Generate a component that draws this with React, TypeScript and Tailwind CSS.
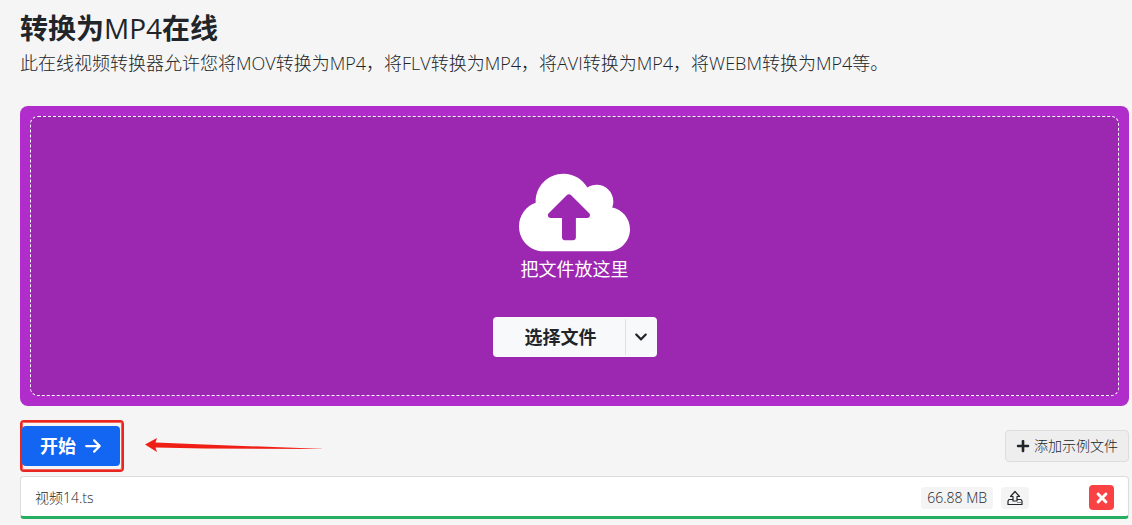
import { FunctionComponent, ReactNode } from 'react';
import { FaChevronDown, FaCloudUploadAlt, FaPlus, FaTimes } from 'react-icons/fa';
import { FaArrowRight } from 'react-icons/fa6';

interface ConvertFile {
  name: string;
  size: string;
}

const files: ConvertFile[] = [{ name: '视频14.ts', size: '66.88 MB' }];

const UploadIcon: FunctionComponent = () => (
  <svg
    className="h-4 w-4"
    viewBox="0 0 16 16"
    fill="none"
    stroke="currentColor"
    strokeWidth="1.2"
    strokeLinejoin="round"
    aria-hidden="true"
  >
    <path d="M8 1.5 12.5 6.5H10V11H6V6.500H3.500Z" />
    <path d="M6 9.500H2L1 11V14.500H15V11L14 9.500H10" />
    <path d="M10.500 12.500H11.500M12.500 12.500H13.500" />
  </svg>
);

const Arrow: FunctionComponent = () => (
  <svg className="ml-5 h-4 w-[182px]" viewBox="0 0 182 16" aria-hidden="true">
    <path d="M1 6.500 13 0 11.500 4.500 60 6.500 182 11 60 10.500 11.500 9.500 13 14Z" fill="#f01f16" />
  </svg>
);

const Dropzone: FunctionComponent = () => (
  <section className="mt-7 rounded-lg bg-[#b02dcb] p-2.5">
    <div className="flex h-[280px] flex-col items-center rounded-lg border border-dashed border-white bg-[#9c27b0] pt-[51px] text-white">
      <FaCloudUploadAlt className="h-[89px] w-[111px]" />
      <p className="text-lg leading-6">把文件放这里</p>
      <div className="mt-9 flex h-10 overflow-hidden rounded bg-[#f8f9fa] text-[#212529]">
        <button type="button" className="pr-7 pl-8 text-lg font-bold">
          选择文件
        </button>
        <button
          type="button"
          aria-label="更多来源"
          className="my-0.5 flex w-8 items-center border-l border-[#dee2e6] pl-2"
        >
          <FaChevronDown className="h-3.5 w-3.5" />
        </button>
      </div>
    </div>
  </section>
);

const Badge: FunctionComponent<{ children: ReactNode }> = ({ children }) => (
  <span className="flex h-[22px] items-center rounded bg-[#f4f4f4] px-1.5">{children}</span>
);

const FileRow: FunctionComponent<{ file: ConvertFile }> = ({ file }) => (
  <li className="flex h-[43px] items-center rounded border border-b-3 border-[#dddddd] border-b-[#27ae60] bg-white px-3.5 pt-0.5 text-sm font-light">
    <span className="flex-1">{file.name}</span>
    <Badge>{file.size}</Badge>
    <button type="button" aria-label="上传" className="ml-2">
      <Badge>
        <UploadIcon />
      </Badge>
    </button>
    <button
      type="button"
      aria-label="删除"
      className="ml-15 flex h-[25px] w-[25px] items-center justify-center rounded bg-[#fa4244] text-white"
    >
      <FaTimes className="h-4 w-4" />
    </button>
  </li>
);

export const App: FunctionComponent = () => (
  <main className="min-h-screen bg-[#f5f5f5] pt-2 pr-[3px] pl-5 font-['Open_Sans','Noto_Sans_CJK_SC',sans-serif] text-[#212529]">
    <h1 className="text-[28px] leading-10 font-bold">
      转换为<span className="font-normal">MP4</span>在线
    </h1>
    <p className="text-lg leading-[30px] font-light">
      此在线视频转换器允许您将MOV转换为MP4，将FLV转换为MP4，将AVI转换为MP4，将WEBM转换为MP4等。
    </p>

    <Dropzone />

    <div className="mt-3.5 flex items-center">
      <div className="rounded border-2 border-[#e8261f] py-1 pr-0.5 shadow-[0_0_0_1px_#f0625c_inset]">
        <button
          type="button"
          className="flex h-10 items-center gap-2 rounded bg-[#1266f1] px-[18px] text-lg font-bold text-white"
        >
          开始
          <FaArrowRight className="h-[18px] w-[18px]" />
        </button>
      </div>
      <Arrow />
      <button
        type="button"
        className="ml-auto flex h-8 items-center gap-1 rounded border border-[#dddddd] bg-[#eeeeee] px-2.5 text-sm font-light"
      >
        <FaPlus className="h-3.5 w-3.5" />
        添加示例文件
      </button>
    </div>

    <ul className="mt-1">
      {files.map((file) => (
        <FileRow key={file.name} file={file} />
      ))}
    </ul>
  </main>
);

export default App;
